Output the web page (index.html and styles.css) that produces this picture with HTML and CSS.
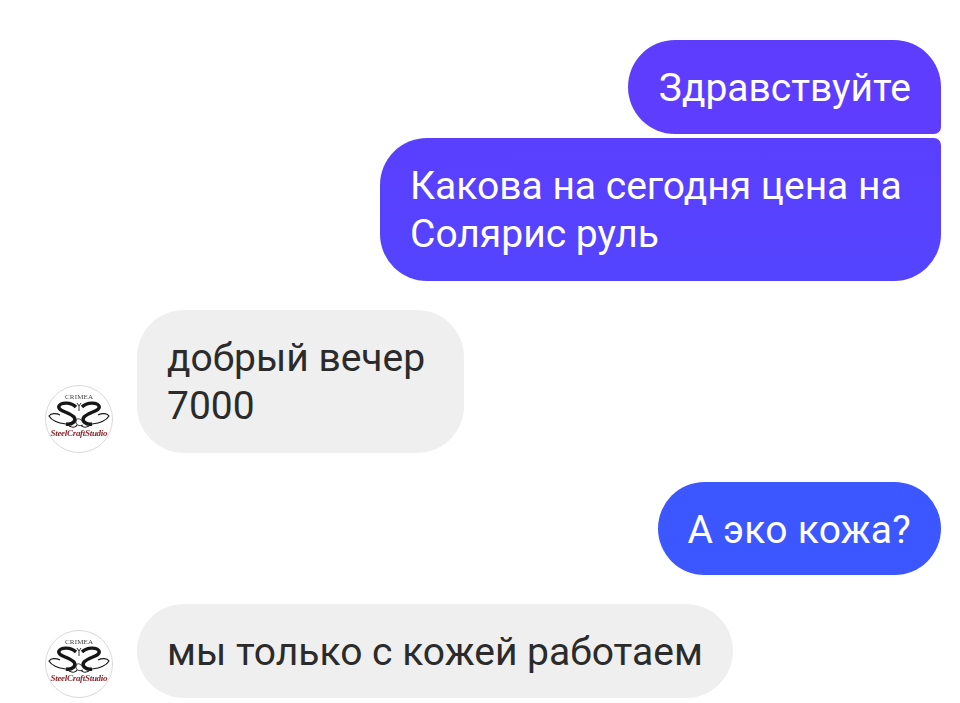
FILE: index.html
```html
<!DOCTYPE html>
<html lang="ru">
<head>
  <meta charset="UTF-8">
  <meta name="viewport" content="width=device-width, initial-scale=1.0">
  <title>Чат</title>
  <link rel="stylesheet" href="styles.css">
</head>
<body>
  <main class="chat">
    <div class="msg out">
      <div class="bubble out-first">Здравствуйте</div>
    </div>
    <div class="msg out stacked">
      <div class="bubble out-last wide">Какова на сегодня цена на Солярис руль</div>
    </div>
    <div class="msg in">
      <svg class="avatar" viewBox="0 0 68 68">
        <circle cx="34" cy="34" r="33.5" fill="#fff" stroke="#d8d8d8"/>
        <text x="34" y="13.5" class="logo-top" textLength="28">CRIMEA</text>
        <g class="swirl">
          <path class="thick" d="M31 22C26 17 16 17 14 21C12 26 24 27 29 32C32 36 27 40 21 39"/>
          <path class="thin" d="M21 39C13 38 7 36 4 31C6 28 11 28 15 30M24 41C28 43 31 42 32 40"/>
        </g>
        <g class="swirl" transform="matrix(-1 0 0 1 68 0)">
          <path class="thick" d="M31 22C26 17 16 17 14 21C12 26 24 27 29 32C32 36 27 40 21 39"/>
          <path class="thin" d="M21 39C13 38 7 36 4 31C6 28 11 28 15 30M24 41C28 43 31 42 32 40"/>
        </g>
        <path class="center" d="M37 36C34 32 30 34 31 38C32 41 36 41 38 40M32 18L34 21L36 18M34 21V26"/>
        <text x="34" y="51" class="logo-name" textLength="57">SteelCraftStudio</text>
      </svg>
      <div class="bubble grey two-line">добрый вечер<br>7000</div>
    </div>
    <div class="msg out">
      <div class="bubble blue">А эко кожа?</div>
    </div>
    <div class="msg in">
      <svg class="avatar" viewBox="0 0 68 68">
        <circle cx="34" cy="34" r="33.5" fill="#fff" stroke="#d8d8d8"/>
        <text x="34" y="13.5" class="logo-top" textLength="28">CRIMEA</text>
        <g class="swirl">
          <path class="thick" d="M31 22C26 17 16 17 14 21C12 26 24 27 29 32C32 36 27 40 21 39"/>
          <path class="thin" d="M21 39C13 38 7 36 4 31C6 28 11 28 15 30M24 41C28 43 31 42 32 40"/>
        </g>
        <g class="swirl" transform="matrix(-1 0 0 1 68 0)">
          <path class="thick" d="M31 22C26 17 16 17 14 21C12 26 24 27 29 32C32 36 27 40 21 39"/>
          <path class="thin" d="M21 39C13 38 7 36 4 31C6 28 11 28 15 30M24 41C28 43 31 42 32 40"/>
        </g>
        <path class="center" d="M37 36C34 32 30 34 31 38C32 41 36 41 38 40M32 18L34 21L36 18M34 21V26"/>
        <text x="34" y="51" class="logo-name" textLength="57">SteelCraftStudio</text>
      </svg>
      <div class="bubble grey">мы только с кожей работаем</div>
    </div>
  </main>
</body>
</html>
```

FILE: styles.css
```css
body {
  margin: 0;
  background-color: #fff;
  font-family: 'Roboto', 'Liberation Sans', sans-serif;
  overflow: hidden;
}
.chat {
  display: flex;
  flex-direction: column;
  gap: 29px;
  padding: 40px 19px 0 45px;
}
.msg {
  display: flex;
  align-items: flex-end;
}
.msg.out {
  justify-content: flex-end;
}
.msg.stacked {
  margin-top: -25px;
}
.msg.in {
  gap: 24px;
}
.avatar {
  width: 68px;
  height: 68px;
  flex: none;
  filter: blur(0.4px);
}
.logo-top {
  font-family: 'Liberation Serif', serif;
  font-size: 7px;
  text-anchor: middle;
  fill: #444;
}
.logo-name {
  font-family: 'Liberation Serif', serif;
  font-style: italic;
  font-weight: bold;
  font-size: 9px;
  text-anchor: middle;
  fill: #8c2a30;
}
.swirl path {
  fill: none;
  stroke: #161616;
}
.swirl .thick {
  stroke-width: 3.4px;
}
.swirl .thin {
  stroke-width: 1.2px;
}
.center {
  fill: none;
  stroke: #333;
  stroke-width: 1px;
}
.bubble {
  padding: 24px 30px 22px;
  font-size: 39px;
  line-height: 48px;
  border-radius: 47px;
  color: #fff;
}
.out-first {
  background-color: #5f3dfe;
  border-radius: 47px 47px 7px 47px;
  padding-left: 31px;
}
.out-last {
  background: linear-gradient(#5a3ffe, #5444ff);
  border-radius: 47px 7px 47px 47px;
}
.wide {
  width: 501px;
  padding-bottom: 23px;
}
.blue {
  background-color: #3c57ff;
  letter-spacing: 0.25px;
  padding-bottom: 21px;
}
.grey {
  background-color: #efefef;
  color: #2b2b2b;
}
.two-line {
  padding-right: 39px;
  padding-bottom: 23px;
}
```
